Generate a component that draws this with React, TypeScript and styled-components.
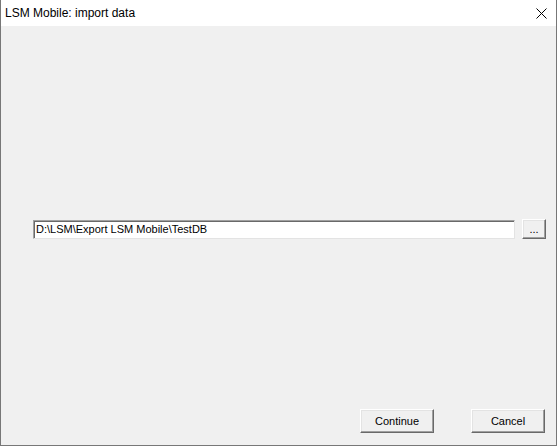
import React from "react";
import styled, { createGlobalStyle } from "styled-components";

const Global = createGlobalStyle`
  html, body { margin: 0; padding: 0; background: #f0f0f0; }
  #root { width: 557px; height: 446px; }
`;

const Window = styled.div`
  box-sizing: border-box;
  width: 557px;
  height: 446px;
  display: flex;
  flex-direction: column;
  border-left: 1px solid #777777;
  border-right: 1px solid #777777;
  border-bottom: 1px solid #777777;
  background: #f0f0f0;
  font-family: "Liberation Sans", Arial, sans-serif;
`;

const TitleBar = styled.div`
  height: 26px;
  flex: none;
  display: flex;
  align-items: center;
  justify-content: space-between;
  background: #ffffff;
  padding-left: 4px;
`;

const Title = styled.span`
  font-size: 12px;
  color: #000000;
`;

const CloseButton = styled.div`
  width: 30px;
  height: 26px;
  display: flex;
  align-items: center;
  justify-content: center;
`;

const Client = styled.div`
  flex: 1;
  display: flex;
  flex-direction: column;
  padding: 0 10px 12px 32px;
`;

const PathRow = styled.div`
  margin-top: 193px;
  display: flex;
  align-items: center;
  gap: 7px;
`;

const PathInput = styled.div`
  box-sizing: border-box;
  width: 482px;
  height: 19px;
  background: #ffffff;
  border-top: 1px solid #a0a0a0;
  border-left: 1px solid #a0a0a0;
  border-right: 1px solid #e3e3e3;
  border-bottom: 1px solid #e3e3e3;
  box-shadow: inset 1px 1px 0 #696969;
  font-size: 11px;
  line-height: 17px;
  padding-left: 2px;
  color: #000000;
  white-space: nowrap;
`;

const ClassicButton = styled.div<{ $w: number; $h: number }>`
  box-sizing: border-box;
  width: ${(p) => p.$w}px;
  height: ${(p) => p.$h}px;
  display: flex;
  align-items: center;
  justify-content: center;
  background: #f0f0f0;
  border-top: 1px solid #ffffff;
  border-left: 1px solid #ffffff;
  border-right: 1px solid #696969;
  border-bottom: 1px solid #696969;
  box-shadow: inset -1px -1px 0 #a0a0a0, inset 1px 1px 0 #e3e3e3;
  font-size: 11px;
  color: #000000;
`;

const Spacer = styled.div`
  flex: 1;
`;

const ButtonRow = styled.div`
  display: flex;
  justify-content: flex-end;
  gap: 37px;
  margin-right: 1px;
`;

export default function App() {
  return (
    <>
      <Global />
      <Window>
        <TitleBar>
          <Title>LSM Mobile: import data</Title>
          <CloseButton>
            <svg width="11" height="11" viewBox="0 0 11 11">
              <path d="M0.5 0.5 L10.5 10.5 M10.5 0.5 L0.5 10.5" stroke="#000" strokeWidth="1" fill="none" />
            </svg>
          </CloseButton>
        </TitleBar>
        <Client>
          <PathRow>
            <PathInput>D:\LSM\Export LSM Mobile\TestDB</PathInput>
            <ClassicButton $w={24} $h={20}>...</ClassicButton>
          </PathRow>
          <Spacer />
          <ButtonRow>
            <ClassicButton $w={74} $h={24}>Continue</ClassicButton>
            <ClassicButton $w={74} $h={24}>Cancel</ClassicButton>
          </ButtonRow>
        </Client>
      </Window>
    </>
  );
}
